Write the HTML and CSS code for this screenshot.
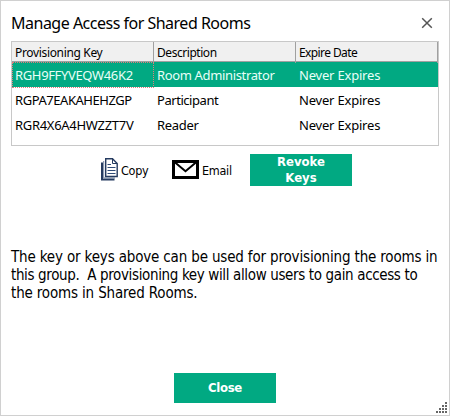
FILE: index.html
```html
<!DOCTYPE html>
<html lang="en">
<head>
<meta charset="utf-8">
<title>Manage Access for Shared Rooms</title>
<link rel="stylesheet" href="styles.css">
</head>
<body>
<main class="dialog">
  <header class="titlebar">
    <h1 class="title">Manage Access for Shared Rooms</h1>
    <button class="dismiss" aria-label="Dismiss"><svg width="12" height="12" viewBox="0 0 12 12"><path d="M1.2 1.2 10.8 10.8M10.8 1.2 1.2 10.8" fill="none" stroke="#555" stroke-width="1.5"/></svg></button>
  </header>
  <section class="grid">
    <div class="head">
      <div class="th h1">Provisioning Key</div><div class="th h2">Description</div><div class="th h3">Expire Date</div>
    </div>
    <div class="row selected">
      <div class="td focus"><span class="k1">RGH9FFYVEQW46K2</span></div><div class="td"><span class="d1">Room Administrator</span></div><div class="td"><span class="exp">Never Expires</span></div>
    </div>
    <div class="row">
      <div class="td"><span class="k2">RGPA7EAKAHEHZGP</span></div><div class="td"><span class="d2">Participant</span></div><div class="td"><span class="exp">Never Expires</span></div>
    </div>
    <div class="row">
      <div class="td"><span class="k3">RGR4X6A4HWZZT7V</span></div><div class="td"><span class="d3">Reader</span></div><div class="td"><span class="exp">Never Expires</span></div>
    </div>
  </section>
  <section class="actions">
    <button class="tool copy">
      <svg width="17" height="23" viewBox="0 0 17 23"><path d="M1 4.5V21.5H13.5" fill="none" stroke="#253b60" stroke-width="2"/><path d="M2.7 3V20H14" fill="none" stroke="#7587a3" stroke-width="1"/><path d="M4.7.7H11.5L16.2 5.5V18.5H4.7Z" fill="#fff" stroke="#253b60" stroke-width="1.4"/><path d="M11.5.7V5.5H16" fill="none" stroke="#253b60"/><path d="M6.5 6.5H10M6.5 9.5H14.5M6.5 12.5H14.5M6.5 15.5H14.5" stroke="#304c78" stroke-width="1.2"/></svg>
      <span class="copy-text">Copy</span>
    </button>
    <button class="tool email">
      <svg width="27" height="19" viewBox="0 0 27 19"><path d="M1.5 1.5H25.5V17.5H1.5Z" fill="#fff" stroke="#000" stroke-width="3"/><path d="M2.5 2 13.5 11.2 24.5 2" fill="none" stroke="#000" stroke-width="2"/></svg>
      <span class="email-text">Email</span>
    </button>
    <button class="primary revoke">Revoke<br>Keys</button>
  </section>
  <p class="note"><span class="n1">The key or keys above can be used for provisioning the rooms in</span><br><span class="n2">this group.&nbsp; A provisioning key will allow users to gain access to</span><br><span class="n3">the rooms in Shared Rooms.</span></p>
  <button class="primary close">Close</button>
  <svg class="grip" width="12" height="12" viewBox="0 0 12 12"><path d="M9 0h2v2h-2zM6 3h2v2h-2zM9 3h2v2h-2zM3 6h2v2h-2zM6 6h2v2h-2zM9 6h2v2h-2zM0 9h2v2h-2zM3 9h2v2h-2zM6 9h2v2h-2zM9 9h2v2h-2z" fill="#666"/></svg>
</main>
</body>
</html>
```
FILE: styles.css
```css
* { box-sizing: border-box; }
body { margin: 0; background: #fff; }
button { margin: 0; padding: 0; border: 0; background: none; font: inherit; color: inherit; white-space: nowrap; }
svg { display: block; flex: none; }
.dialog {
  position: relative;
  display: flex;
  flex-direction: column;
  width: 450px;
  height: 416px;
  padding: 0 10px;
  border: 1px solid #d0d0d0;
  color: #000;
  font-family: "DejaVu Sans Condensed", "DejaVu Sans", sans-serif;
  font-stretch: condensed;
}
.titlebar { display: flex; justify-content: space-between; height: 40px; padding-right: 6px; }
.title { margin: 11px 0 0; font: 400 16px/22px "Noto Sans", sans-serif; letter-spacing: -0.5px; white-space: nowrap; }
.dismiss { margin-top: 16px; height: 12px; }
.grid { height: 105px; border: 1px solid #c8c8c8; width: 428px; font-family: "Noto Sans", sans-serif; white-space: nowrap; }
.head, .row { display: grid; grid-template-columns: 142px 142px 142px; }
.head { height: 20px; background: #f0f0f0; border-bottom: 1px solid #a0a0a0; font-size: 12px; line-height: 21px; }
.th { padding-left: 3px; border-right: 1px solid #a0a0a0; }
.h1 { letter-spacing: -0.34px; }
.h2 { letter-spacing: -0.45px; }
.h3 { letter-spacing: -0.6px; }
.row { height: 25px; font-size: 13px; line-height: 26px; }
.td { padding-left: 3px; }
.k1 { letter-spacing: -0.35px; }
.k2 { letter-spacing: -0.45px; }
.k3 { letter-spacing: -0.3px; }
.d1 { letter-spacing: -0.35px; }
.d2 { letter-spacing: -0.45px; }
.d3 { letter-spacing: -0.3px; }
.exp { letter-spacing: -0.2px; }
.selected { background: #01a982; color: #e8fff8; }
.focus { outline: 1px dotted #e07c7c; outline-offset: -1px; }
.actions { display: flex; height: 32px; margin-top: 8px; padding-left: 90px; font-size: 12.5px; }
.tool { display: flex; line-height: 16px; letter-spacing: -0.3px; }
.copy { gap: 3px; width: 71px; margin-top: 4px; }
.copy span { margin-top: 5px; }
.email { gap: 3px; width: 78px; margin-top: 6px; }
.email span { margin-top: 3px; }
.primary { background: #01a982; color: #fff; width: 102px; font-weight: 700; font-size: 13px; line-height: 16px; text-align: center; }
.note { margin: 62px 0 0; font-size: 15px; line-height: 18px; white-space: nowrap; }
.n1 { letter-spacing: -0.16px; }
.n2 { letter-spacing: -0.36px; }
.n3 { letter-spacing: -0.16px; }
.close { height: 30px; margin: 71px 0 0 163px; letter-spacing: -0.3px; }
.grip { position: absolute; right: 1px; bottom: 1px; }
```
